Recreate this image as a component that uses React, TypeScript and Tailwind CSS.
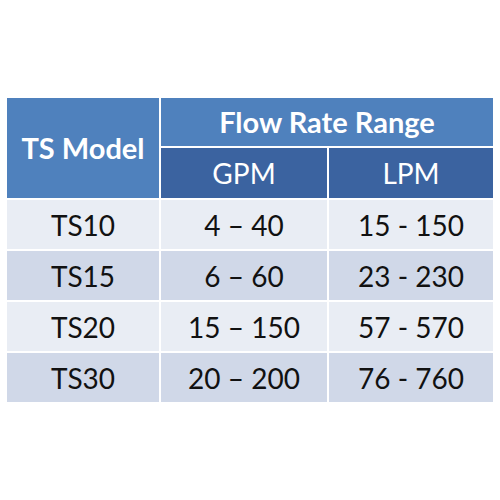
const rows = [
  { model: "TS10", gpm: "4 – 40", lpm: "15 - 150" },
  { model: "TS15", gpm: "6 – 60", lpm: "23 - 230" },
  { model: "TS20", gpm: "15 – 150", lpm: "57 - 570" },
  { model: "TS30", gpm: "20 – 200", lpm: "76 - 760" },
];

export default function App() {
  return (
    <div className="h-[500px] w-[500px] bg-white pl-[7px] pt-[98px] font-['Lato','Liberation_Sans',sans-serif]">
      <div className="grid w-[486px] grid-cols-[152px_166px_164px] grid-rows-[48px_50px_49px_49px_49px_49px] gap-[2px] bg-white text-[28px]">
        <div className="row-span-2 flex items-center justify-center bg-[#4f81bd] text-[29px] font-bold text-white">
          TS Model
        </div>
        <div className="col-span-2 flex items-center justify-center bg-[#4f81bd] text-[29px] font-bold text-white">
          Flow Rate Range
        </div>
        <div className="flex items-center justify-center bg-[#3b63a0] text-white">
          GPM
        </div>
        <div className="flex items-center justify-center bg-[#3b63a0] text-white">
          LPM
        </div>
        {rows.map((row, i) => {
          const bg = i % 2 === 0 ? "bg-[#e9edf4]" : "bg-[#d0d8e8]";
          return [
            <div key={row.model + "m"} className={`flex items-center justify-center text-[#111] ${bg}`}>
              {row.model}
            </div>,
            <div key={row.model + "g"} className={`flex items-center justify-center text-[#111] ${bg}`}>
              {row.gpm}
            </div>,
            <div key={row.model + "l"} className={`flex items-center justify-center text-[#111] ${bg}`}>
              {row.lpm}
            </div>,
          ];
        })}
      </div>
    </div>
  );
}
